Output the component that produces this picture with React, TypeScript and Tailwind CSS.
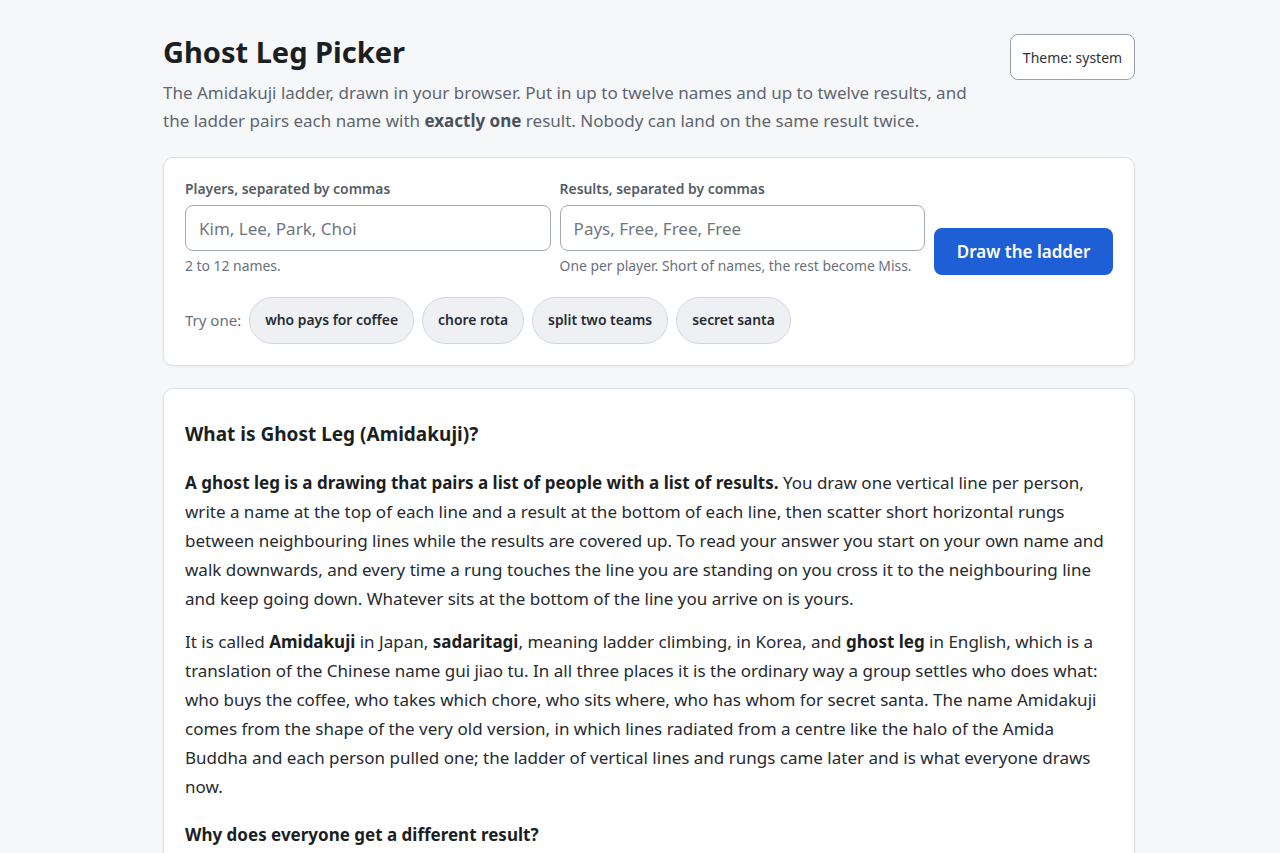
import React from "react";

export default function App() {
  const chips = ["who pays for coffee", "chore rota", "split two teams", "secret santa"];
  return (
    <div className="min-h-screen bg-[#f6f7f9] text-[#1d2127]" style={{ fontFamily: '"Noto Sans", "Open Sans", sans-serif' }}>
      <div className="w-[972px] ml-[163px] pt-[34px] pb-10">
        <header className="flex items-start justify-between">
          <div>
            <h1 className="text-[29px] font-bold leading-[36px] text-[#1b1f24]">Ghost Leg Picker</h1>
            <p className="mt-[9px] max-w-[810px] text-[17px] leading-[28px] text-[#5f6670]">
              The Amidakuji ladder, drawn in your browser. Put in up to twelve names and up to twelve results, and the ladder pairs each name with{" "}
              <strong className="font-bold text-[#4b5159]">exactly one</strong> result. Nobody can land on the same result twice.
            </p>
          </div>
          <button className="mt-[0px] h-[46px] w-[125px] rounded-lg border border-[#9aa1ac] bg-white text-[14px] text-[#2d323a]">
            Theme: system
          </button>
        </header>

        <section className="mt-[22px] rounded-[10px] border border-[#dcdfe4] bg-white px-[21px] pt-[21px] pb-[21px] shadow-[0_1px_3px_rgba(0,0,0,0.05)]">
          <div className="flex items-start gap-[9px]">
            <div className="w-[366px]">
              <label className="block text-[13.9px] font-semibold leading-[20px] text-[#555c66]">Players, separated by commas</label>
              <input
                className="mt-[6px] h-[46px] w-full rounded-lg border border-[#a3a9b3] px-[13px] text-[17px] text-[#1d2127] placeholder-[#70767f] outline-none"
                placeholder="Kim, Lee, Park, Choi"
              />
              <p className="mt-[5px] text-[13.9px] leading-[20px] text-[#6a7079]">2 to 12 names.</p>
            </div>
            <div className="w-[366px]">
              <label className="block text-[13.9px] font-semibold leading-[20px] text-[#555c66]">Results, separated by commas</label>
              <input
                className="mt-[6px] h-[46px] w-full rounded-lg border border-[#a3a9b3] px-[13px] text-[17px] text-[#1d2127] placeholder-[#70767f] outline-none"
                placeholder="Pays, Free, Free, Free"
              />
              <p className="mt-[5px] text-[13.9px] leading-[20px] text-[#6a7079]">One per player. Short of names, the rest become Miss.</p>
            </div>
            <button className="mt-[49px] h-[47px] w-[179px] rounded-lg bg-[#1f5fd6] text-[17px] font-semibold text-white">
              Draw the ladder
            </button>
          </div>
          <div className="mt-[21px] flex items-center gap-[8px]">
            <span className="text-[15px] text-[#6a7079]">Try one:</span>
            {chips.map((c) => (
              <button
                key={c}
                className="h-[47px] rounded-full border border-[#d3d7dd] bg-[#eef0f3] px-[15px] text-[13.9px] font-semibold text-[#272c33]"
              >
                {c}
              </button>
            ))}
          </div>
        </section>

        <section className="mt-[22px] rounded-[10px] border border-[#dcdfe4] bg-white px-[21px] pt-[31px] pb-6 shadow-[0_1px_3px_rgba(0,0,0,0.05)] text-[17px] leading-[29px] text-[#262a31]">
          <h2 className="text-[19px] font-bold leading-[28px] text-[#1b1f24]">What is Ghost Leg (Amidakuji)?</h2>
          <p className="mt-[20px]">
            <strong className="font-bold text-[#1b1f24]">A ghost leg is a drawing that pairs a list of people with a list of results.</strong> You draw one vertical line per person, write a name at the top of each line and a result at the bottom of each line, then scatter short horizontal rungs between neighbouring lines while the results are covered up. To read your answer you start on your own name and walk downwards, and every time a rung touches the line you are standing on you cross it to the neighbouring line and keep going down. Whatever sits at the bottom of the line you arrive on is yours.
          </p>
          <p className="mt-[14px]">
            It is called <strong className="font-bold text-[#1b1f24]">Amidakuji</strong> in Japan, <strong className="font-bold text-[#1b1f24]">sadaritagi</strong>, meaning ladder climbing, in Korea, and <strong className="font-bold text-[#1b1f24]">ghost leg</strong> in English, which is a translation of the Chinese name gui jiao tu. In all three places it is the ordinary way a group settles who does what: who buys the coffee, who takes which chore, who sits where, who has whom for secret santa. The name Amidakuji comes from the shape of the very old version, in which lines radiated from a centre like the halo of the Amida Buddha and each person pulled one; the ladder of vertical lines and rungs came later and is what everyone draws now.
          </p>
          <h3 className="mt-[20px] text-[17px] font-bold leading-[28px] text-[#1b1f24]">Why does everyone get a different result?</h3>
          <p className="mt-[12px]">
            Every rung joins exactly two neighbouring lines, and whoever walks across it swaps places with whoever walks across it from the other side. Because each rung is a swap, the ladder as a whole is just a chain of swaps, and a chain of swaps can never send two people to the same place.
          </p>
        </section>
      </div>
    </div>
  );
}
